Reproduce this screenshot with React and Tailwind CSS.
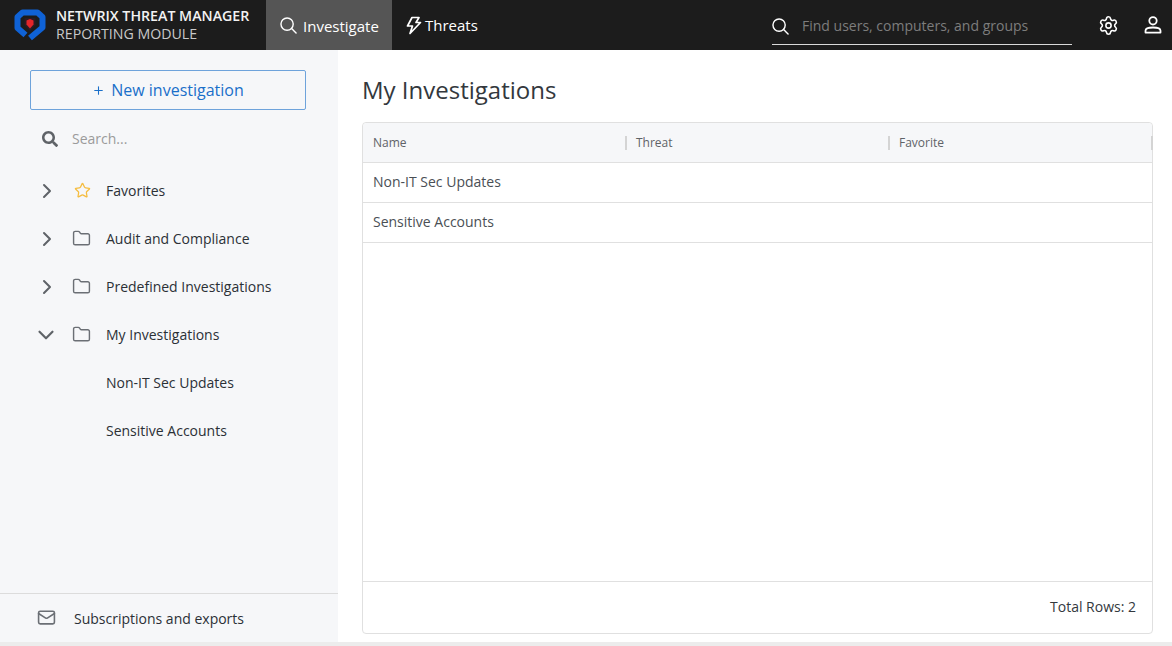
import React from "react";
import { ChevronRight, ChevronDown, Star, Folder, Mail, Settings, Plus } from "lucide-react";
import { FaSearch } from "react-icons/fa";

const Logo = () => (
  <svg width="32" height="32" viewBox="0 0 32 32" fill="none">
    <path d="M11.500 26 L3.500 19 V8 L8.500 3.500 H23.500 L28.500 8 V18.500 L16 29" stroke="#0f62d6" strokeWidth="6" strokeLinejoin="round" />
    <path d="M10.500 9h11v7l-5.500 6-5.500-6z" fill="#2b1b24" />
    <path d="M12.500 11.500l3.500-1.500 3.500 1.500v4l-3.500 4-3.500-4z" fill="#e5252a" />
  </svg>
);

const Bolt = () => (
  <svg width="16" height="19" viewBox="0 0 16 19" fill="none" stroke="currentColor" strokeWidth="1.700" strokeLinejoin="round">
    <path d="M6 1.500h7l-3 5h4.500L4 17.500 6.500 10H1.500z" />
  </svg>
);

const Person = () => (
  <svg width="18" height="18" viewBox="0 0 18 18" fill="none" stroke="currentColor" strokeWidth="1.800" strokeLinejoin="round">
    <circle cx="9" cy="4.800" r="3.700" />
    <path d="M1.500 16.600v-1.800c0-2 3-3.300 7.500-3.300s7.500 1.300 7.500 3.300v1.800z" />
  </svg>
);

const Magnifier = ({ size }) => (
  <svg width={size} height={size} viewBox="0 0 18 18" fill="none" stroke="currentColor" strokeWidth="1.500" strokeLinecap="round">
    <circle cx="7.500" cy="7.500" r="6.500" />
    <path d="M12.300 12.300L17 17" />
  </svg>
);

const TreeRow = ({ open, icon, children }) => (
  <div className="flex h-12 items-center">
    <div className="mb-[1px] flex w-[106px] items-center">
      <div className="flex w-[72px] justify-end pr-[13px]">
        {open ? (
          <ChevronDown size={26} strokeWidth={2} className="text-[#5f6368]" />
        ) : (
          <ChevronRight size={24} strokeWidth={2} className="text-[#5f6368]" />
        )}
      </div>
      {icon}
    </div>
    <span className="text-sm text-[#2b3036]">{children}</span>
  </div>
);

const folder = <Folder size={19} strokeWidth={1.800} className="text-[#6b6f75]" />;
const rows = ["Non-IT Sec Updates", "Sensitive Accounts"];

export default function App() {
  return (
    <div className="flex h-[646px] flex-col overflow-hidden bg-white font-['Open_Sans',sans-serif]">
      <header className="flex h-[50px] shrink-0 items-center bg-[#1c1c1c] text-white">
        <div className="flex w-[266px] items-center pl-[14px]">
          <Logo />
          <div className="ml-[10px] text-[14.200px] leading-[18px]">
            <div className="font-semibold text-[#f2f2f2]">NETWRIX THREAT MANAGER</div>
            <div className="text-[#c9c9c9]">REPORTING MODULE</div>
          </div>
        </div>
        <div className="flex h-full w-[126px] items-center gap-[6px] bg-[#555555] pl-[14px] text-[15px]">
          <Magnifier size={17} />
          <span className="pt-[2px]">Investigate</span>
        </div>
        <div className="flex h-full items-center gap-[3px] pl-[14px] text-[15px]">
          <Bolt />
          <span>Threats</span>
        </div>
        <div className="ml-auto flex h-full items-center pr-[10px]">
          <div className="mb-[5px] mr-[26px] flex h-[36px] w-[300px] items-center self-end border-b border-[#d9d9d9]">
            <Magnifier size={17} />
            <span className="ml-[13px] pb-[2px] text-sm text-[#7d7d7d]">Find users, computers, and groups</span>
          </div>
          <Settings size={21} strokeWidth={1.800} />
          <div className="ml-[25px]"><Person /></div>
        </div>
      </header>

      <div className="flex min-h-0 flex-1">
        <aside className="flex w-[338px] shrink-0 flex-col bg-[#f6f7f9]">
          <div className="px-[30px] pt-[20px]">
            <button className="flex h-[40px] w-[276px] items-center justify-center gap-[6px] rounded-[2px] border border-[#6ea3db] text-base text-[#1a6fc9]">
              <Plus size={13} strokeWidth={2} />
              <span>New investigation</span>
            </button>
          </div>
          <div className="flex h-[58px] items-center pl-[42px]">
            <FaSearch size={16} className="text-[#5f6368]" />
            <span className="ml-[14px] text-sm text-[#9b9b9b]">Search...</span>
          </div>
          <div className="mt-[-1px]">
            <TreeRow icon={<Star size={17} strokeWidth={1.800} className="ml-[2px] text-[#f5bd41]" />}>Favorites</TreeRow>
            <TreeRow icon={folder}>Audit and Compliance</TreeRow>
            <TreeRow icon={folder}>Predefined Investigations</TreeRow>
            <TreeRow open icon={folder}>My Investigations</TreeRow>
            {rows.map((r) => (
              <div key={r} className="flex h-12 items-center pl-[106px] text-sm text-[#2b3036]">{r}</div>
            ))}
          </div>
          <div className="mt-auto flex h-[49px] items-center border-t border-[#dcdcdc] pl-[37px] pt-[2px]">
            <Mail size={19} strokeWidth={2} className="mb-[3px] text-[#6b6f75]" />
            <span className="ml-[18px] text-sm text-[#2b3036]">Subscriptions and exports</span>
          </div>
        </aside>

        <main className="flex min-w-0 flex-1 flex-col pb-[8px] pl-[24px] pr-[19px]">
          <h1 className="flex h-[72px] shrink-0 items-center pt-[8px] text-2xl text-[#33383d]">My Investigations</h1>
          <div className="flex min-h-0 flex-1 flex-col rounded-[4px] border border-[#e0e0e0]">
            <div className="grid h-[40px] shrink-0 grid-cols-3 rounded-t-[4px] border-b border-[#e0e0e0] bg-[#f6f7f9] text-xs text-[#5f6368]">
              {["Name", "Threat", "Favorite"].map((h) => (
                <div key={h} className="flex items-center justify-between pl-[10px]">
                  <span>{h}</span>
                  <span className="mr-[-1px] h-[14px] w-[2px] bg-[#d4d4d4]" />
                </div>
              ))}
            </div>
            {rows.map((r) => (
              <div key={r} className="flex h-[40px] shrink-0 items-center border-b border-[#e0e0e0] pb-[2px] pl-[10px] text-sm text-[#4a4f55]">{r}</div>
            ))}
            <div className="mt-auto flex h-[52px] items-center justify-end border-t border-[#e0e0e0] pb-[2px] pr-[16px] text-sm text-[#33383d]">
              Total Rows: 2
            </div>
          </div>
        </main>
      </div>
      <div className="h-[4px] shrink-0 bg-[#ececec]" />
    </div>
  );
}
